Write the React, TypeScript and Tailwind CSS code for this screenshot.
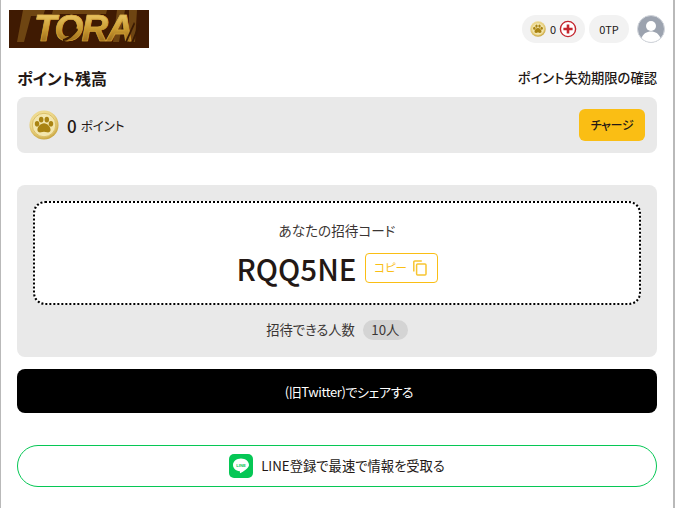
import React from "react";

const font = { fontFamily: '"Noto Sans CJK JP", "Noto Sans", sans-serif' };

function Paw({ size }: { size: number }) {
  return (
    <svg width={size} height={size} viewBox="0 0 32 32" className="shrink-0">
      <defs>
        <radialGradient id={`coin${size}`} cx="45%" cy="40%" r="60%">
          <stop offset="0%" stopColor="#f8edb8" />
          <stop offset="70%" stopColor="#ecd688" />
          <stop offset="100%" stopColor="#c9a53e" />
        </radialGradient>
      </defs>
      <circle cx="16" cy="16" r="15.5" fill={`url(#coin${size})`} />
      <circle cx="16" cy="16" r="12.5" fill="#f3e6ae" stroke="#d9bc62" strokeWidth="1" />
      <g fill="#a98312">
        <ellipse cx="8.6" cy="14.6" rx="2.4" ry="3" />
        <ellipse cx="13" cy="10.2" rx="2.4" ry="3.1" />
        <ellipse cx="19" cy="10.2" rx="2.4" ry="3.1" />
        <ellipse cx="23.4" cy="14.6" rx="2.4" ry="3" />
        <path d="M16 14c-3.6 0-7 4-7 7 0 2.4 2 3.2 3.8 2.8 1.2-.3 2.2-.6 3.2-.6s2 .3 3.2.6c1.8.4 3.8-.4 3.8-2.8 0-3-3.4-7-7-7z" />
      </g>
    </svg>
  );
}

function Logo() {
  return (
    <div className="relative flex h-[38px] w-[140px] items-center justify-center bg-[#3f1a02]">
      <svg width="140" height="38" viewBox="0 0 140 38" className="absolute inset-0">
        <g fill="#6e4512">
          <path d="M14 0h22l-2 6H22l-7 26H8z" />
          <path d="M108 0h8l-6 32h-6z" />
          <path d="M120 0h8l-2 32h-6z" />
          <path d="M44 0h54l-1 4H43z" />
        </g>
      </svg>
      <span
        className="relative ml-[8px] bg-gradient-to-b from-[#f0cf6c] via-[#c99a30] to-[#8a5a14] bg-clip-text px-[4px] text-[37px] italic leading-[36px] tracking-[-1.6px] text-transparent [-webkit-text-stroke:0.6px_#d9a93f]"
        style={{ fontFamily: '"Liberation Sans", sans-serif', fontWeight: 700 }}
      >
        TORA
      </span>
      <svg width="140" height="38" viewBox="0 0 140 38" className="absolute inset-0">
        <g fill="#3a1a03">
          <path d="M54 29c5-1 10-6 14-11l1 2c-4 6-10 11-15 11z" />
          <path d="M58 20c3-1 6-3 9-6l1 2c-3 3-6 5-10 6z" />
          <path d="M116 32l9-20 1 2-8 18z" />
          <path d="M122 33l8-20 1 3-7 17z" />
        </g>
      </svg>
    </div>
  );
}

export default function App() {
  return (
    <div className="h-[508px] w-[675px] overflow-hidden bg-white [font-feature-settings:'palt']" style={font}>
      <div className="h-full w-[675px] border-l border-r-2 border-x-[#b9b9b9] text-[#231815]">
        <header className="flex h-[58px] items-center justify-between pl-2 pr-[8px]">
          <Logo />
          <div className="flex items-center gap-[4px]">
            <div className="flex h-[28px] w-[63px] items-center rounded-full bg-[#f2f2f2] pl-[8px] text-[11px] leading-none">
              <Paw size={16} />
              <span className="ml-[4px]">0</span>
              <svg width="18" height="18" viewBox="0 0 18 18" className="ml-[3px]">
                <circle cx="9" cy="9" r="7.6" fill="#fff" stroke="#c4262e" strokeWidth="1.4" />
                <path d="M9 4.4v9.2M4.4 9h9.2" stroke="#c4262e" strokeWidth="2.6" />
              </svg>
            </div>
            <div className="flex h-[28px] w-[40px] items-center justify-center rounded-full bg-[#f2f2f2] text-[11px] leading-none">
              0TP
            </div>
            <svg width="28" height="28" viewBox="0 0 28 28" className="ml-[4px]">
              <circle cx="14" cy="14" r="13.5" fill="#9ca3af" stroke="#d1d5db" strokeWidth="1" />
              <circle cx="14" cy="11" r="5" fill="#fff" />
              <path d="M4.5 23c1.8-4.4 5.2-6.5 9.5-6.5s7.7 2.1 9.5 6.5a13.4 13.4 0 0 1-19 0z" fill="#fff" />
            </svg>
          </div>
        </header>

        <section className="px-4">
          <div className="flex h-[39px] items-center justify-between">
            <h2 className="text-[16px] font-bold leading-none">ポイント残高</h2>
            <span className="text-[13.3px] font-medium leading-none">ポイント失効期限の確認</span>
          </div>
          <div className="flex h-[56px] items-center justify-between rounded-lg bg-[#e9e9e9] px-3">
            <div className="flex items-center">
              <Paw size={30} />
              <span className="ml-[8px] text-[17px] font-medium leading-none">0</span>
              <span className="ml-[4px] mt-[3px] text-[12.5px] leading-none">ポイント</span>
            </div>
            <button className="flex h-[32px] w-[66px] items-center justify-center rounded-md bg-[#fabe14] text-[12px] font-medium leading-none tracking-[-0.3px] text-[#231815]">
              チャージ
            </button>
          </div>

          <div className="mt-8 h-[172px] rounded-lg bg-[#e9e9e9] p-4">
            <div className="flex h-[104px] flex-col items-center rounded-xl border-2 border-dotted border-black bg-white pt-[18px]">
              <p className="text-[13.6px] leading-[18px] text-[#3a3533]">あなたの招待コード</p>
              <div className="mt-[10px] flex items-center gap-[8px]">
                <span className="text-[29.5px] font-medium leading-[38px] text-[#231815]">RQQ5NE</span>
                <button className="flex h-[30px] w-[73px] items-center justify-center gap-[5px] rounded border border-[#fabe14] bg-white text-[11.5px] leading-none text-[#fabe14]">
                  コピー
                  <svg width="16" height="16" viewBox="0 0 16 16" fill="none" stroke="#f7c531" strokeWidth="1.5">
                    <rect x="4.6" y="4" width="9.4" height="11" rx="1" />
                    <path d="M1.8 11.5V2a1 1 0 0 1 1-1h7" />
                  </svg>
                </button>
              </div>
            </div>
            <div className="mt-[15px] flex items-center justify-center gap-2 text-[13.3px] leading-none text-[#3a3533]">
              <span>招待できる人数</span>
              <span className="flex h-[20px] w-[45px] items-center justify-center rounded-full bg-[#d4d4d4]">10人</span>
            </div>
          </div>

          <button className="mt-3 flex h-[44px] w-full items-center justify-center rounded-lg bg-black pl-6 text-[13px] leading-none tracking-[-0.4px] text-white">
            (旧Twitter)でシェアする
          </button>

          <button className="mt-8 flex h-[42px] w-full items-center justify-center gap-[8px] rounded-full border border-[#06c755] bg-white text-[13.3px] leading-none text-[#231815]">
            <svg width="24" height="24" viewBox="0 0 24 24">
              <rect width="24" height="24" rx="5" fill="#06c755" />
              <path d="M12 4.6c-4.4 0-8 2.8-8 6.4 0 3.2 2.8 5.8 6.6 6.3.6.1.4.8.3 1.4 0 .4.2.6.6.4 1.4-.7 5.4-3.2 7-5.2.9-1 1.5-1.9 1.5-2.9 0-3.6-3.6-6.4-8-6.4z" fill="#fff" />
              <text x="12" y="12.8" textAnchor="middle" fontSize="4.2" fontWeight="700" fill="#06c755" fontFamily="Liberation Sans">LINE</text>
            </svg>
            LINE登録で最速で情報を受取る
          </button>
        </section>
      </div>
    </div>
  );
}
